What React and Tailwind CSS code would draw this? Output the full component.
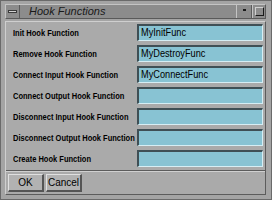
import React from "react";

const rows = [
  ["Init Hook Function", "MyInitFunc"],
  ["Remove Hook Function", "MyDestroyFunc"],
  ["Connect Input Hook Function", "MyConnectFunc"],
  ["Connect Output Hook Function", ""],
  ["Disconnect Input Hook Function", ""],
  ["Disconnect Output Hook Function", ""],
  ["Create Hook Function", ""],
];

export default function App() {
  return (
    <div
      className="w-[272px] h-[200px] bg-[#a4a4a4] flex flex-col pt-[3px] pl-[4px] pr-[5px] pb-[4px] border border-[#6a6a6a]"
      style={{ fontFamily: '"Liberation Sans", Arial, sans-serif' }}
    >
      {/* title bar */}
      <div className="h-[15px] flex bg-[#8c8c8c] border-t border-l border-[#c4c4c4] border-b border-r border-b-[#5a5a5a] border-r-[#5a5a5a]">
        <div className="w-[14px] flex items-center justify-center border-r border-[#5a5a5a]">
          <div className="w-[9px] h-[3px] bg-[#d0d0d0] border border-[#3a3a3a]" />
        </div>
        <div className="flex-1 flex items-center pl-[9px] italic text-[11px] text-[#1a1a1a] leading-none">
          Hook Functions
        </div>
        <div className="w-[16px] flex items-center justify-center border-l border-[#c4c4c4] border-r border-r-[#5a5a5a]">
          <div className="w-[3px] h-[2px] bg-[#1a1a1a] mt-[-3px]" />
        </div>
        <div className="w-[13px] flex items-center justify-center border-l border-[#c4c4c4]">
          <div className="w-[9px] h-[9px] border border-[#1a1a1a] border-l-[#d0d0d0] border-t-[#d0d0d0]" />
        </div>
      </div>
      {/* body */}
      <div className="flex-1 flex flex-col mt-[2px] bg-[#aaaaaa] border-t border-l border-[#cfcfcf] border-r border-b border-r-[#5c5c5c] border-b-[#5c5c5c]">
        <div className="flex flex-col gap-[4px] pt-[2px] pl-[7px] pr-[2px]">
          {rows.map(([label, value]) => (
            <div key={label} className="flex items-center h-[17px]">
              <div className="flex-1 min-w-0 overflow-visible">
                <div className="text-[9.5px] font-bold text-black leading-none whitespace-nowrap origin-left scale-x-[0.79]">
                  {label}
                </div>
              </div>
              <div className="w-[126px] h-[17px] bg-[#88c3d3] border-t-2 border-l-2 border-[#3f4f55] border-b border-r border-b-[#d6eef4] border-r-[#d6eef4] flex items-center pl-[2px] text-[10px] text-black leading-none whitespace-nowrap">
                <span className="origin-left scale-x-[0.92] inline-block">{value}</span>
              </div>
            </div>
          ))}
        </div>
        <div className="mt-[3px] border-t border-[#5c5c5c] border-b border-b-[#d0d0d0]" />
        <div className="flex gap-[2px] pt-[2px] pl-[2px]">
          <button className="w-[36px] h-[18px] bg-[#b2b2b2] border-t border-l border-[#e0e0e0] border-b-2 border-r-2 border-b-[#555] border-r-[#555] text-[10px] text-black leading-none">
            OK
          </button>
          <button className="w-[36px] h-[18px] bg-[#b2b2b2] border-t border-l border-[#e0e0e0] border-b-2 border-r-2 border-b-[#555] border-r-[#555] text-[10px] text-black leading-none">
            Cancel
          </button>
        </div>
      </div>
    </div>
  );
}
